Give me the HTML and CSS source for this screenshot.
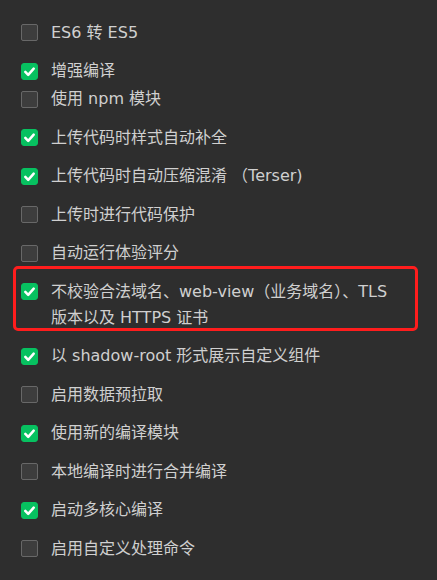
FILE: index.html
```html
<!DOCTYPE html>
<html lang="zh-CN">
<head>
<meta charset="utf-8">
<link rel="stylesheet" href="styles.css">
</head>
<body>
<ul class="options">
  <li class="option"><span class="box"></span><span class="label">ES6 转 ES5</span></li>
  <li class="option option-tight"><span class="box on"><svg viewBox="0 0 17 17"><path d="M4.3 8.9 L7.2 11.9 L12.7 5.6"/></svg></span><span class="label">增强编译</span></li>
  <li class="option"><span class="box"></span><span class="label">使用 npm 模块</span></li>
  <li class="option"><span class="box on"><svg viewBox="0 0 17 17"><path d="M4.3 8.9 L7.2 11.9 L12.7 5.6"/></svg></span><span class="label">上传代码时样式自动补全</span></li>
  <li class="option"><span class="box on"><svg viewBox="0 0 17 17"><path d="M4.3 8.9 L7.2 11.9 L12.7 5.6"/></svg></span><span class="label">上传代码时自动压缩混淆 （Terser)</span></li>
  <li class="option"><span class="box"></span><span class="label">上传时进行代码保护</span></li>
  <li class="option"><span class="box"></span><span class="label">自动运行体验评分</span></li>
  <li class="option highlighted"><span class="box on"><svg viewBox="0 0 17 17"><path d="M4.3 8.9 L7.2 11.9 L12.7 5.6"/></svg></span><span class="label">不校验合法域名、web-view（业务域名）、TLS<br>版本以及 HTTPS 证书</span></li>
  <li class="option"><span class="box on"><svg viewBox="0 0 17 17"><path d="M4.3 8.9 L7.2 11.9 L12.7 5.6"/></svg></span><span class="label">以 shadow-root 形式展示自定义组件</span></li>
  <li class="option"><span class="box"></span><span class="label">启用数据预拉取</span></li>
  <li class="option"><span class="box on"><svg viewBox="0 0 17 17"><path d="M4.3 8.9 L7.2 11.9 L12.7 5.6"/></svg></span><span class="label">使用新的编译模块</span></li>
  <li class="option"><span class="box"></span><span class="label">本地编译时进行合并编译</span></li>
  <li class="option"><span class="box on"><svg viewBox="0 0 17 17"><path d="M4.3 8.9 L7.2 11.9 L12.7 5.6"/></svg></span><span class="label">启动多核心编译</span></li>
  <li class="option"><span class="box"></span><span class="label">启用自定义处理命令</span></li>
</ul>
</body>
</html>
```
FILE: styles.css
```css
html, body {
  margin: 0;
  padding: 0;
  background: #2e2e2e;
  height: 100%;
}
body {
  font-family: "DejaVu Sans", "Noto Sans CJK SC", sans-serif;
  font-size: 16px;
  color: #d0d0d0;
}
.options {
  list-style: none;
  margin: 0;
  padding: 19.5px 0 0 21px;
  display: flex;
  flex-direction: column;
  gap: 12.5px;
}
.option {
  display: flex;
  align-items: flex-start;
  gap: 13px;
  line-height: 26px;
  position: relative;
}
.option-tight {
  margin-bottom: -10.5px;
}
.box {
  flex: none;
  width: 17px;
  height: 17px;
  margin-top: 4.5px;
  box-sizing: border-box;
  border: 1px solid #686868;
  border-radius: 2px;
  background: #3d3d3d;
  display: flex;
}
.box.on {
  background: #07c160;
  border-color: #07c160;
  border-radius: 3px;
}
.box svg {
  width: 17px;
  height: 17px;
  margin: -1px;
}
.box svg path {
  fill: none;
  stroke: #ffffff;
  stroke-width: 2.5;
  stroke-linecap: round;
  stroke-linejoin: round;
}
.label {
  white-space: nowrap;
}
.highlighted::after {
  content: "";
  position: absolute;
  left: -8px;
  top: -13px;
  width: 405px;
  height: 65px;
  box-sizing: border-box;
  border: 3px solid #ff1d1d;
  border-radius: 5px;
  pointer-events: none;
}
```
